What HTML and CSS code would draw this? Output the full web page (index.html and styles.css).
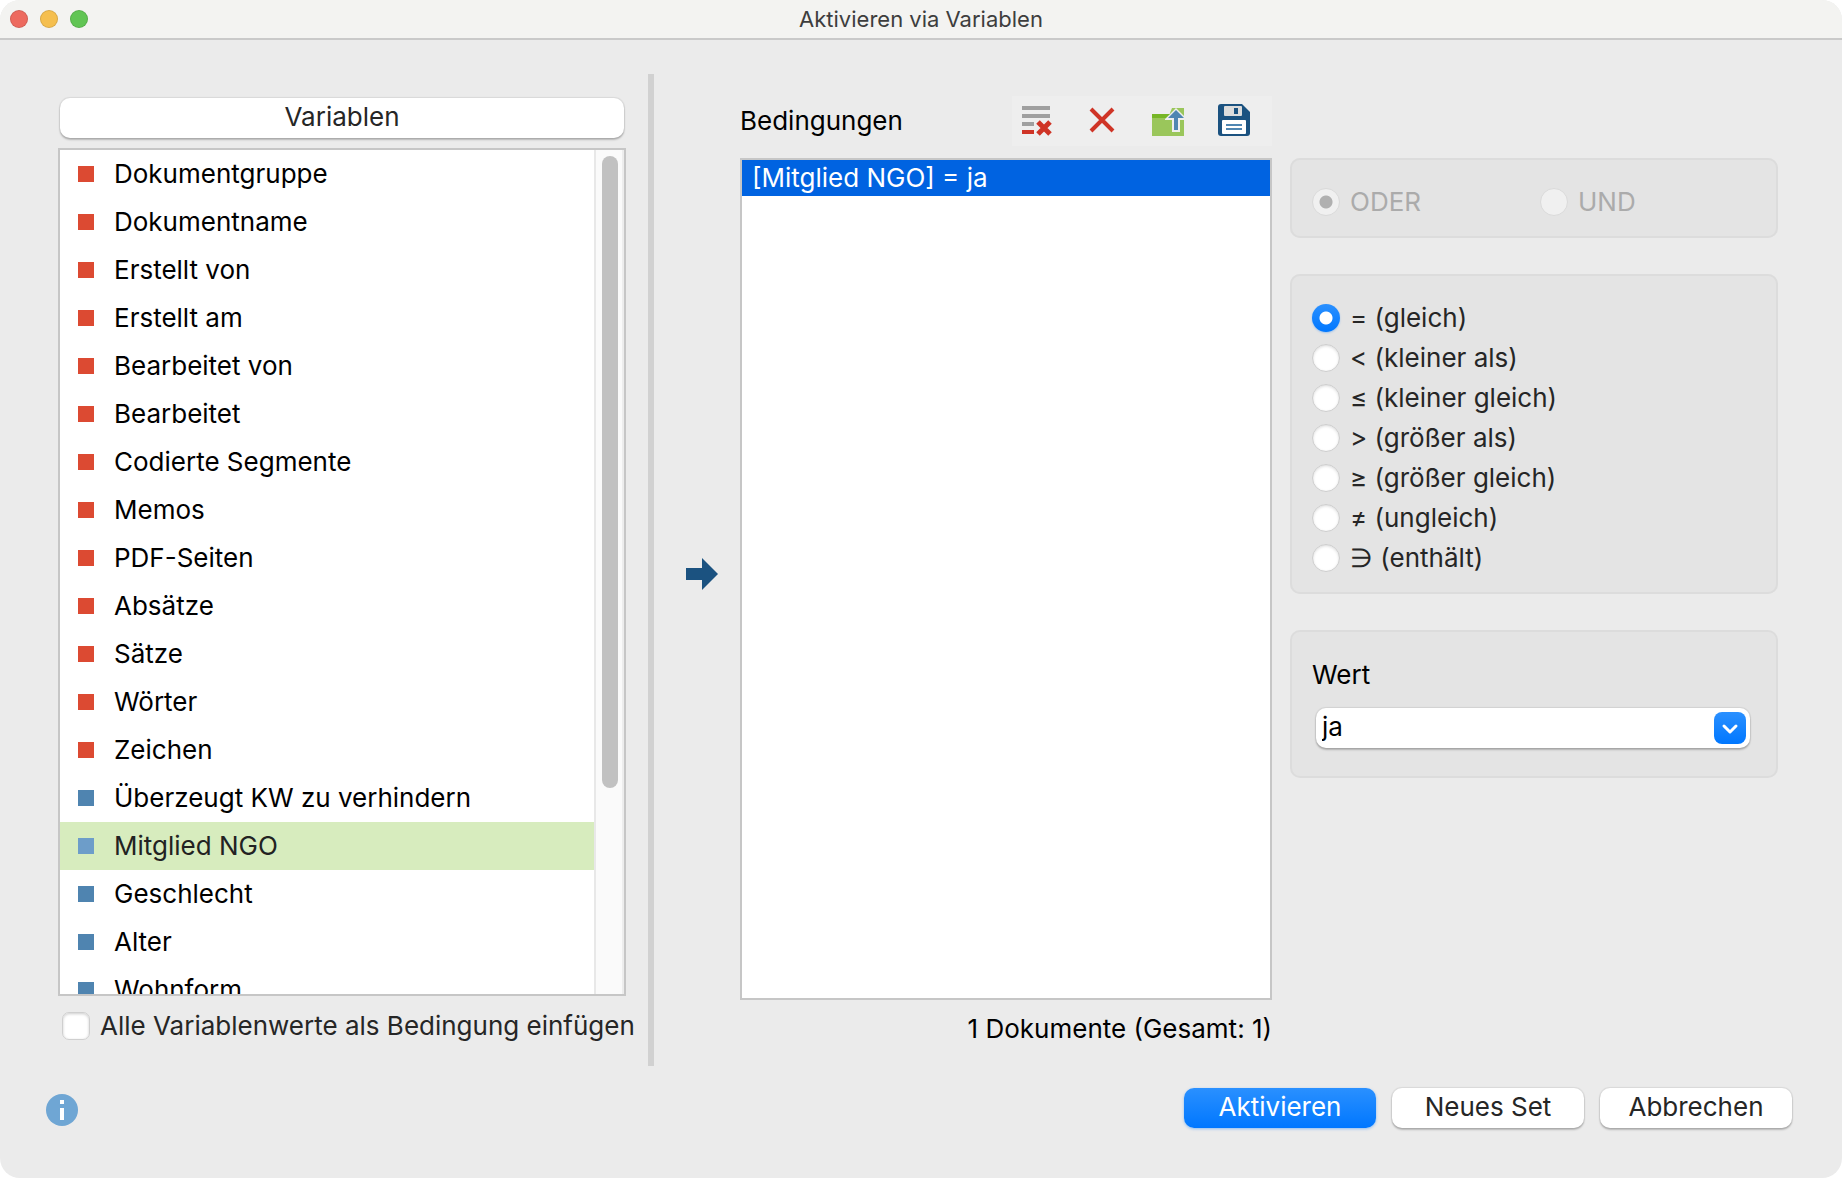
FILE: index.html
```html
<!DOCTYPE html>
<html lang="de">
  <head>
    <meta charset="utf-8" />
    <title>Aktivieren via Variablen</title>
    <link rel="stylesheet" href="styles.css" />
  </head>
  <body>
    <div class="window">
      <header class="titlebar">
        <div class="lights">
          <button class="light red" aria-label="Schließen"></button>
          <button class="light yellow" aria-label="Minimieren"></button>
          <button class="light green" aria-label="Maximieren"></button>
        </div>
        <h1 class="title">Aktivieren via Variablen</h1>
      </header>

      <main class="content">
        <section class="variables">
          <button class="btn">Variablen</button>
          <div class="list-box">
            <ul class="variable-list" role="listbox" aria-label="Variablen">
              <li class="variable system" role="option">Dokumentgruppe</li>
              <li class="variable system" role="option">Dokumentname</li>
              <li class="variable system" role="option">Erstellt von</li>
              <li class="variable system" role="option">Erstellt am</li>
              <li class="variable system" role="option">Bearbeitet von</li>
              <li class="variable system" role="option">Bearbeitet</li>
              <li class="variable system" role="option">Codierte Segmente</li>
              <li class="variable system" role="option">Memos</li>
              <li class="variable system" role="option">PDF-Seiten</li>
              <li class="variable system" role="option">Absätze</li>
              <li class="variable system" role="option">Sätze</li>
              <li class="variable system" role="option">Wörter</li>
              <li class="variable system" role="option">Zeichen</li>
              <li class="variable" role="option">Überzeugt KW zu verhindern</li>
              <li class="variable selected" role="option" aria-selected="true">Mitglied NGO</li>
              <li class="variable" role="option">Geschlecht</li>
              <li class="variable" role="option">Alter</li>
              <li class="variable" role="option">Wohnform</li>
            </ul>
            <div class="scrollbar"><div class="thumb"></div></div>
          </div>
          <label class="check-row">
            <input type="checkbox" class="checkbox" />
            Alle Variablenwerte als Bedingung einfügen
          </label>
        </section>

        <div class="divider"></div>

        <button class="icon-btn add-btn" aria-label="Bedingung hinzufügen">
          <svg width="32" height="32" viewBox="0 0 32 32">
            <path d="M0 10h16V0l16 16-16 16V22H0z" fill="#1b5280" />
          </svg>
        </button>

        <section class="conditions">
          <div class="conditions-head">
            <h2 class="label">Bedingungen</h2>
            <div class="toolbar">
              <button class="icon-btn" aria-label="Alle löschen">
                <svg width="32" height="32" viewBox="0 0 32 32">
                  <path d="M2 2h28v4H2zM2 10h28v4H2zM2 18h12v4H2z" fill="#9f9f9f" />
                  <path d="M2 26h12v4H2z" fill="#cf3426" />
                  <path d="M18 18l12 12M30 18L18 30" stroke="#cf3426" stroke-width="5" />
                </svg>
              </button>
              <button class="icon-btn" aria-label="Löschen">
                <svg width="32" height="32" viewBox="0 0 32 32">
                  <path d="M5 5l22 22M27 5L5 27" stroke="#cf3426" stroke-width="4" />
                </svg>
              </button>
              <button class="icon-btn" aria-label="Öffnen">
                <svg width="32" height="32" viewBox="0 0 32 32">
                  <path d="M0 14h16l4-10h12v28H0z" fill="#9ac65b" />
                  <path d="M0 10h18v4H0z" fill="#76b626" />
                  <path d="M13 15L24 4l11 11v1h-7v12h-8V16h-7z" fill="#eeeeee" />
                  <path d="M16 14l8-8 8 8h-6v12h-4V14z" fill="#4f86b2" />
                </svg>
              </button>
              <button class="icon-btn" aria-label="Speichern">
                <svg width="32" height="32" viewBox="0 0 32 32">
                  <path d="M3 0h21l8 8v21a3 3 0 0 1-3 3H3a3 3 0 0 1-3-3V3a3 3 0 0 1 3-3z" fill="#1b5280" />
                  <rect x="6" y="2" width="18" height="10" rx="1" fill="#dcdcdc" />
                  <path d="M16 4h4v6h-4z" fill="#1b5280" />
                  <rect x="4" y="16" width="24" height="14" rx="1" fill="#fff" />
                  <path d="M8 20h16v2H8zM8 24h16v2H8z" fill="#4f86b2" />
                </svg>
              </button>
            </div>
          </div>
          <ul class="condition-list" role="listbox" aria-label="Bedingungen">
            <li class="condition" role="option" aria-selected="true">[Mitglied NGO] = ja</li>
          </ul>
          <p class="count">1 Dokumente (Gesamt: 1)</p>
        </section>

        <section class="options">
          <fieldset class="group logic" disabled>
            <label class="radio-row"><input type="radio" class="radio" name="logic" checked />ODER</label>
            <label class="radio-row"><input type="radio" class="radio" name="logic" />UND</label>
          </fieldset>

          <fieldset class="group operators">
            <label class="radio-row"><input type="radio" class="radio" name="op" checked />= (gleich)</label>
            <label class="radio-row"><input type="radio" class="radio" name="op" />&lt; (kleiner als)</label>
            <label class="radio-row"><input type="radio" class="radio" name="op" />≤ (kleiner gleich)</label>
            <label class="radio-row"><input type="radio" class="radio" name="op" />&gt; (größer als)</label>
            <label class="radio-row"><input type="radio" class="radio" name="op" />≥ (größer gleich)</label>
            <label class="radio-row"><input type="radio" class="radio" name="op" />≠ (ungleich)</label>
            <label class="radio-row"><input type="radio" class="radio" name="op" />∋ (enthält)</label>
          </fieldset>

          <div class="group value">
            <label class="label" for="value">Wert</label>
            <div class="select-wrap">
              <select class="select" id="value">
                <option>ja</option>
                <option>nein</option>
              </select>
              <svg class="chevron" width="32" height="32" viewBox="0 0 32 32">
                <path d="M10 14l6 6 6-6" fill="none" stroke="#fff" stroke-width="3" stroke-linecap="round" stroke-linejoin="round" />
              </svg>
            </div>
          </div>
        </section>
      </main>

      <footer class="footer">
        <button class="icon-btn" aria-label="Info">
          <svg width="32" height="32" viewBox="0 0 32 32">
            <circle cx="16" cy="16" r="16" fill="#6fa6d4" />
            <path d="M14 6h4v4h-4zM14 14h4v12h-4z" fill="#fff" />
          </svg>
        </button>
        <div class="actions">
          <button class="btn primary">Aktivieren</button>
          <button class="btn">Neues Set</button>
          <button class="btn">Abbrechen</button>
        </div>
      </footer>
    </div>
  </body>
</html>
```
FILE: styles.css
```css
* {
  box-sizing: border-box;
}

body {
  margin: 0;
  background-color: #fff;
  color: #000;
  font-family: Inter, "Noto Sans", sans-serif;
  font-size: 26px;
  line-height: 30px;
}

button,
select,
input {
  font: inherit;
  margin: 0;
}

ul {
  list-style: none;
  margin: 0;
  padding: 0;
}

.window {
  display: flex;
  flex-direction: column;
  min-height: 100vh;
  background-color: #ebebeb;
  border-radius: 20px;
  overflow: hidden;
}

/* title bar */
.titlebar {
  display: grid;
  grid-template-columns: 1fr auto 1fr;
  align-items: center;
  height: 40px;
  padding: 0 10px;
  background-color: #f3f3f1;
  border-bottom: 2px solid #c9c9c9;
}

.lights {
  display: flex;
  gap: 12px;
}

.light {
  width: 18px;
  height: 18px;
  padding: 0;
  border: 1px solid rgba(0, 0, 0, 0.12);
  border-radius: 50%;
}

.red {
  background-color: #ed6a5f;
}

.yellow {
  background-color: #f5bf4f;
}

.green {
  background-color: #61c554;
}

.title {
  margin: 0;
  font-size: 22px;
  font-weight: 400;
  color: #3d3d3d;
}

/* main area */
.content {
  flex: 1;
  display: flex;
  padding: 34px 64px 0 58px;
}

.variables {
  flex: 568 1 0;
  min-width: 0;
  display: flex;
  flex-direction: column;
  padding: 24px 0 26px;
}

.btn {
  height: 40px;
  padding: 0 0 2px;
  border: none;
  border-radius: 10px;
  background-color: #fff;
  color: #262626;
  box-shadow: 0 0 1px 1px rgba(0, 0, 0, 0.08), 0 2px 2px rgba(0, 0, 0, 0.22);
}

.variables .btn {
  margin: 0 2px 10px;
}

.list-box {
  flex: 1 1 0;
  min-height: 0;
  display: flex;
  border: 2px solid #c6c6c6;
  background-color: #fff;
}

.variable-list {
  flex: 1;
  height: 100%;
  overflow: hidden;
}

.variable-list,
.scrollbar {
  /* rows are clipped at the bottom edge of the box */
  contain: size;
}

.variable {
  display: flex;
  align-items: center;
  gap: 20px;
  height: 48px;
  padding-left: 18px;
}

.variable::before {
  content: "";
  width: 16px;
  height: 16px;
  background-color: #4f84b0;
}

.variable.system::before {
  background-color: #dc4a32;
}

.variable.selected {
  background-color: #d7ecbe;
  color: #222;
}

.variable.selected::before {
  background-color: #6d9dc9;
}

.scrollbar {
  width: 30px;
  padding: 6px;
  border-left: 2px solid #e8e8e8;
  border-right: 2px solid #ededed;
  background-color: #fafafa;
}

.thumb {
  width: 16px;
  height: 76%;
  border-radius: 8px;
  background-color: #c1c1c1;
}

.check-row {
  display: flex;
  align-items: center;
  gap: 10px;
  height: 28px;
  margin-top: 16px;
  padding-left: 4px;
  color: #262626;
  white-space: nowrap;
}

.checkbox {
  appearance: none;
  flex-shrink: 0;
  width: 28px;
  height: 28px;
  border: 1px solid #cfcfcf;
  border-radius: 7px;
  background-color: #fff;
  box-shadow: inset 0 1px 3px rgba(0, 0, 0, 0.2);
}

.divider {
  width: 6px;
  margin-left: 22px;
  background-color: #d1d1d1;
}

.icon-btn {
  width: 32px;
  height: 32px;
  padding: 0;
  border: none;
  background: none;
}

.icon-btn svg {
  display: block;
}

.add-btn {
  align-self: center;
  margin: 8px 22px 0 32px;
}

.conditions {
  flex: 532 1 0;
  min-width: 0;
  display: flex;
  flex-direction: column;
  padding: 22px 0;
}

.conditions-head {
  display: flex;
  justify-content: space-between;
  align-items: center;
  margin-bottom: 12px;
}

.label {
  margin: 0;
  font-size: 26px;
  font-weight: 400;
}

.toolbar {
  display: flex;
  gap: 34px;
  padding: 8px 22px 10px 8px;
  background-color: #eee;
}

.condition-list {
  flex: 1;
  border: 2px solid #c6c6c6;
  background-color: #fff;
}

.condition {
  height: 36px;
  padding-left: 10px;
  line-height: 36px;
  background-color: #0063e1;
  color: #fff;
}

.count {
  margin: 14px 0 0;
  text-align: right;
}

/* right side panels */
.options {
  flex: 488 1 0;
  min-width: 0;
  display: flex;
  flex-direction: column;
  gap: 36px;
  margin-left: 18px;
  padding-top: 84px;
}

.group {
  margin: 0;
  padding: 28px 20px 20px;
  border: 2px solid #dcdcdc;
  border-radius: 10px;
  background-color: #e4e4e4;
  color: #262626;
}

.logic {
  display: grid;
  grid-template-columns: 1fr 1fr;
  column-gap: 12px;
  color: #ababab;
}

.operators {
  display: grid;
  gap: 12px;
}

.radio-row {
  display: flex;
  align-items: center;
  gap: 10px;
  height: 28px;
}

.radio {
  appearance: none;
  flex-shrink: 0;
  width: 28px;
  height: 28px;
  border: 1px solid #cdcdcd;
  border-radius: 50%;
  background-color: #fff;
  box-shadow: inset 0 1px 3px rgba(0, 0, 0, 0.15);
}

.radio:checked {
  border: none;
  background: radial-gradient(circle, #fff 6px, transparent 7px), linear-gradient(#2a90ff, #0077ff);
  box-shadow: 0 1px 2px rgba(0, 122, 255, 0.3);
}

.radio:disabled {
  border: 1px solid #dadada;
  background: #f0f0f0;
  box-shadow: none;
}

.radio:disabled:checked {
  background: radial-gradient(circle, #b0b0b0 6px, #f0f0f0 7px);
}

.value {
  display: grid;
  gap: 18px;
  padding-bottom: 28px;
  color: #000;
}

.select-wrap {
  position: relative;
  margin: 0 6px 0 4px;
}

.select {
  display: block;
  width: 100%;
  height: 40px;
  padding: 0 44px 2px 6px;
  border: none;
  border-radius: 10px;
  appearance: none;
  background-color: #fff;
  color: #000;
  box-shadow: 0 0 1px 1px rgba(0, 0, 0, 0.08), 0 2px 2px rgba(0, 0, 0, 0.22);
}

.chevron {
  position: absolute;
  top: 4px;
  right: 4px;
  border-radius: 8px;
  background: linear-gradient(#2a90ff, #0077ff);
  pointer-events: none;
}

/* footer */
.footer {
  display: flex;
  justify-content: space-between;
  padding: 22px 50px 50px 46px;
}

.footer .icon-btn {
  margin-top: 6px;
}

.actions {
  display: flex;
  gap: 16px;
}

.actions .btn {
  width: 192px;
}

.btn.primary {
  background: linear-gradient(#2a90ff, #0077ff);
  color: #fff;
  box-shadow: 0 1px 3px rgba(0, 122, 255, 0.4);
}
```
